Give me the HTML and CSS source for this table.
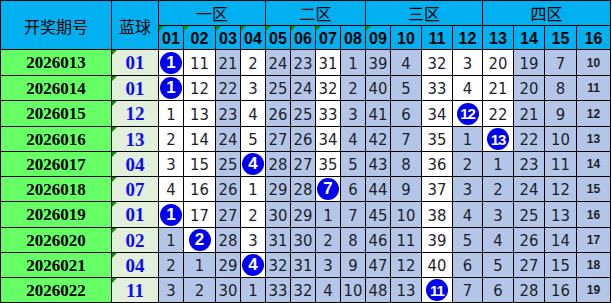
FILE: index.html
```html
<!DOCTYPE html>
<html lang="zh-CN">
<head>
<meta charset="utf-8">
<title>蓝球走势</title>
<link rel="stylesheet" href="styles.css">
</head>
<body>
<div class="sheet">
  <div class="h hl">开奖期号</div>
  <div class="h hl">蓝球</div>
  <div class="h zone">一区</div>
  <div class="h zone">二区</div>
  <div class="h zone">三区</div>
  <div class="h zone">四区</div>
  <div class="h n tri">01</div><div class="h n tri">02</div><div class="h n tri">03</div><div class="h n tri">04</div>
  <div class="h n tri">05</div><div class="h n tri">06</div><div class="h n tri">07</div><div class="h n">08</div>
  <div class="h n tri">09</div><div class="h n">10</div><div class="h n">11</div><div class="h n">12</div>
  <div class="h n">13</div><div class="h n">14</div><div class="h n">15</div><div class="h n">16</div>

  <div class="p">2026013</div><div class="b tri">01</div>
  <div class="c w"><span class="ball">1</span></div><div class="c w">11</div><div class="c">21</div><div class="c w">2</div>
  <div class="c">24</div><div class="c">23</div><div class="c w">31</div><div class="c">1</div>
  <div class="c">39</div><div class="c">4</div><div class="c w">32</div><div class="c w">3</div>
  <div class="c w">20</div><div class="c">19</div><div class="c">7</div><div class="c s">10</div>

  <div class="p">2026014</div><div class="b tri">01</div>
  <div class="c w"><span class="ball">1</span></div><div class="c w">12</div><div class="c">22</div><div class="c w">3</div>
  <div class="c">25</div><div class="c">24</div><div class="c w">32</div><div class="c">2</div>
  <div class="c">40</div><div class="c">5</div><div class="c w">33</div><div class="c w">4</div>
  <div class="c w">21</div><div class="c">20</div><div class="c">8</div><div class="c s">11</div>

  <div class="p">2026015</div><div class="b tri">12</div>
  <div class="c w">1</div><div class="c w">13</div><div class="c">23</div><div class="c w">4</div>
  <div class="c">26</div><div class="c">25</div><div class="c w">33</div><div class="c">3</div>
  <div class="c">41</div><div class="c">6</div><div class="c w">34</div><div class="c w"><span class="ball two">12</span></div>
  <div class="c w">22</div><div class="c">21</div><div class="c">9</div><div class="c s">12</div>

  <div class="p">2026016</div><div class="b tri">13</div>
  <div class="c w">2</div><div class="c w">14</div><div class="c">24</div><div class="c w">5</div>
  <div class="c">27</div><div class="c">26</div><div class="c w">34</div><div class="c">4</div>
  <div class="c">42</div><div class="c">7</div><div class="c w">35</div><div class="c">1</div>
  <div class="c w"><span class="ball two">13</span></div><div class="c">22</div><div class="c">10</div><div class="c s">13</div>

  <div class="p">2026017</div><div class="b tri">04</div>
  <div class="c w">3</div><div class="c w">15</div><div class="c">25</div><div class="c w"><span class="ball">4</span></div>
  <div class="c">28</div><div class="c">27</div><div class="c w">35</div><div class="c">5</div>
  <div class="c">43</div><div class="c">8</div><div class="c w">36</div><div class="c">2</div>
  <div class="c">1</div><div class="c">23</div><div class="c">11</div><div class="c s">14</div>

  <div class="p">2026018</div><div class="b tri">07</div>
  <div class="c w">4</div><div class="c w">16</div><div class="c">26</div><div class="c w">1</div>
  <div class="c">29</div><div class="c">28</div><div class="c w"><span class="ball">7</span></div><div class="c">6</div>
  <div class="c">44</div><div class="c">9</div><div class="c w">37</div><div class="c">3</div>
  <div class="c">2</div><div class="c">24</div><div class="c">12</div><div class="c s">15</div>

  <div class="p">2026019</div><div class="b tri">01</div>
  <div class="c w"><span class="ball">1</span></div><div class="c w">17</div><div class="c">27</div><div class="c w">2</div>
  <div class="c">30</div><div class="c">29</div><div class="c">1</div><div class="c">7</div>
  <div class="c">45</div><div class="c">10</div><div class="c w">38</div><div class="c">4</div>
  <div class="c">3</div><div class="c">25</div><div class="c">13</div><div class="c s">16</div>

  <div class="p">2026020</div><div class="b tri">02</div>
  <div class="c">1</div><div class="c w"><span class="ball">2</span></div><div class="c">28</div><div class="c w">3</div>
  <div class="c">31</div><div class="c">30</div><div class="c">2</div><div class="c">8</div>
  <div class="c">46</div><div class="c">11</div><div class="c w">39</div><div class="c">5</div>
  <div class="c">4</div><div class="c">26</div><div class="c">14</div><div class="c s">17</div>

  <div class="p">2026021</div><div class="b tri">04</div>
  <div class="c">2</div><div class="c">1</div><div class="c">29</div><div class="c w"><span class="ball">4</span></div>
  <div class="c">32</div><div class="c">31</div><div class="c">3</div><div class="c">9</div>
  <div class="c">47</div><div class="c">12</div><div class="c w">40</div><div class="c">6</div>
  <div class="c">5</div><div class="c">27</div><div class="c">15</div><div class="c s">18</div>

  <div class="p">2026022</div><div class="b tri">11</div>
  <div class="c">3</div><div class="c">2</div><div class="c">30</div><div class="c">1</div>
  <div class="c">33</div><div class="c">32</div><div class="c">4</div><div class="c">10</div>
  <div class="c">48</div><div class="c">13</div><div class="c w"><span class="ball two">11</span></div><div class="c">7</div>
  <div class="c">6</div><div class="c">28</div><div class="c">16</div><div class="c s">19</div>
</div>
</body>
</html>
```

FILE: styles.css
```css
html, body {
  margin: 0;
  padding: 0;
  background: #ffffff;
}

.sheet {
  display: grid;
  width: max-content;
  grid-template-columns: 110px 46px 24px 31px 24px 24px 24px 24px 24px 24px 24px 30px 30px 29px 30px 30px 31px 33px;
  grid-template-rows: 24px 23px 25px 24px 25px 24px 24px 24px 25px 24px 24px 24px;
  gap: 1px;
  padding: 1px;
  background: #000000;
  font-family: "Liberation Sans", Arial, sans-serif;
}

.sheet > div {
  position: relative;
  display: flex;
  align-items: center;
  justify-content: center;
  overflow: hidden;
  white-space: nowrap;
}

.h {
  background: #00b0f0;
  color: #000000;
}

.hl {
  grid-row: span 2;
  font-family: "Noto Sans CJK SC", sans-serif;
  font-size: 16px;
  padding-top: 1px;
}

.zone {
  grid-column: span 4;
  font-family: "Noto Sans CJK SC", sans-serif;
  font-size: 16px;
}

.n {
  font-weight: bold;
  font-size: 16px;
  padding-top: 2px;
}

.tri::before {
  content: "";
  position: absolute;
  left: 0;
  top: 0;
  width: 0;
  height: 0;
  border-top: 5px solid #0f8a0f;
  border-right: 5px solid transparent;
}

.p {
  background: #66ff66;
  font-family: "Liberation Serif", "Times New Roman", serif;
  font-weight: bold;
  font-size: 17px;
  color: #000000;
  padding-top: 1px;
}

.b {
  background: #e2efda;
  font-family: "Liberation Serif", "Times New Roman", serif;
  font-weight: bold;
  font-size: 19px;
  color: #0a0aff;
  padding-top: 1px;
}

.c {
  background: #b4c6e7;
  font-family: "Liberation Sans Narrow", "Arial Narrow", "DejaVu Sans Condensed", sans-serif;
  font-stretch: condensed;
  font-size: 16.5px;
  color: #1e1e28;
  padding-top: 1px;
}

.c.w {
  background: #ffffff;
}

.c.s {
  font-family: "Liberation Sans", Arial, sans-serif;
  font-stretch: normal;
  font-weight: bold;
  font-size: 12px;
  padding-top: 0;
}

.ball {
  display: flex;
  align-items: center;
  justify-content: center;
  width: 22px;
  height: 22px;
  border-radius: 50%;
  background: #0000f0;
  color: #ffffff;
  font-family: "Liberation Sans", Arial, sans-serif;
  font-stretch: normal;
  font-weight: bold;
  font-size: 17px;
  margin-top: -1px;
}

.ball.two {
  font-size: 15px;
  letter-spacing: -1px;
}
```
